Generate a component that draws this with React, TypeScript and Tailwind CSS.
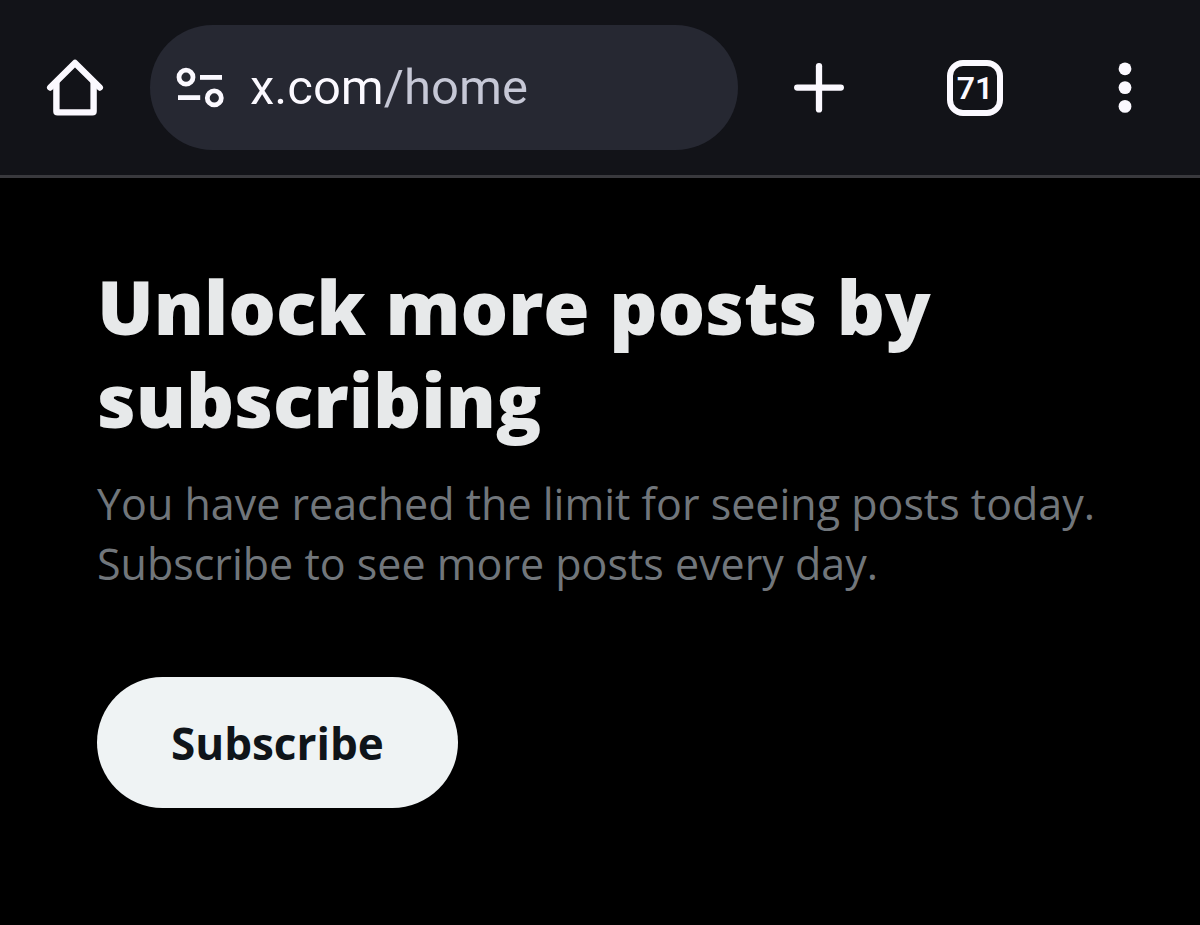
import { useState } from 'react';

function HomeIcon() {
  return (
    <svg width="60" height="60" viewBox="0 0 60 60" fill="none" stroke="currentColor" strokeWidth="6.4" strokeLinecap="round" strokeLinejoin="round" aria-hidden="true">
      <path d="M5.2 29.6 L30 5 L54.8 29.6" />
      <path d="M11.4 25 V53.2 Q11.4 54.4 12.6 54.4 H47.4 Q48.6 54.4 48.6 53.2 V25" />
    </svg>
  );
}

function SiteInfoIcon() {
  return (
    <svg width="48" height="48" viewBox="0 0 48 48" fill="none" stroke="currentColor" strokeWidth="4.8" aria-hidden="true">
      <circle cx="10" cy="13.2" r="7" />
      <path d="M24 13.4 H46" />
      <path d="M2 33.6 H24.2" />
      <circle cx="38.3" cy="33.9" r="7" />
    </svg>
  );
}

function PlusIcon() {
  return (
    <svg width="50" height="50" viewBox="0 0 50 50" fill="none" stroke="currentColor" strokeWidth="6.3" strokeLinecap="round" aria-hidden="true">
      <path d="M25 3.2 V46.4" />
      <path d="M3.2 24.6 H46.8" />
    </svg>
  );
}

function DotsIcon() {
  return (
    <svg width="14" height="52" viewBox="0 0 14 52" fill="currentColor" aria-hidden="true">
      <circle cx="7" cy="6.8" r="6.4" />
      <circle cx="7" cy="25.6" r="6.4" />
      <circle cx="7" cy="44.4" r="6.4" />
    </svg>
  );
}

function BrowserBar({ tabCount }: { tabCount: number }) {
  const [url, setUrl] = useState('x.com/home');

  return (
    <header className="flex h-[178px] items-center border-b-3 border-[#39393d] bg-[#121318] text-[#fbf9ff]">
      <button type="button" aria-label="Home" className="flex h-[125px] w-[150px] shrink-0 items-center justify-center">
        <HomeIcon />
      </button>

      <div className="flex h-[125px] min-w-0 flex-1 items-center gap-[26px] rounded-full bg-[#262832] pr-10 pl-[26px]">
        <button type="button" aria-label="Site information" className="shrink-0">
          <SiteInfoIcon />
        </button>
        {/* host is bright, the path after it is dimmed */}
        <input
          type="text"
          aria-label="Address"
          value={url}
          onChange={(e) => setUrl(e.target.value)}
          className="min-w-0 flex-1 bg-[linear-gradient(90deg,#fbf9ff_133px,#c6c8d6_133px)] bg-clip-text font-[Roboto,sans-serif] text-[49px] leading-[66px] text-transparent outline-none"
        />
      </div>

      <button type="button" aria-label="New tab" className="flex h-[125px] w-[162px] shrink-0 items-center justify-center">
        <PlusIcon />
      </button>
      <button type="button" aria-label="Switch tabs" className="flex h-[125px] w-[150px] shrink-0 items-center justify-center">
        <span className="flex size-14 items-center justify-center rounded-2xl border-6 border-current font-[Roboto,sans-serif] text-[32px] leading-8 font-semibold">
          {tabCount}
        </span>
      </button>
      <button type="button" aria-label="Menu" className="flex h-[125px] w-[150px] shrink-0 items-center justify-center">
        <DotsIcon />
      </button>
    </header>
  );
}

export default function App() {
  return (
    <div className="min-h-screen bg-black font-['Open_Sans',sans-serif]">
      <BrowserBar tabCount={71} />

      <main className="pt-[82px] pr-6 pb-20 pl-[97px]">
        <h1 className="text-[75px] leading-[93px] font-extrabold text-[#e7e9ea]">
          Unlock more posts by
          <br />
          subscribing
        </h1>
        <p className="mt-7 text-[43px] leading-[60px] text-[#71767b]">
          You have reached the limit for seeing posts today.
          <br />
          Subscribe to see more posts every day.
        </p>
        <button type="button" className="mt-[83px] flex h-[131px] items-center rounded-full bg-[#eff3f4] px-[74px] text-[44px] font-bold text-[#0f1419]">
          Subscribe
        </button>
      </main>
    </div>
  );
}
